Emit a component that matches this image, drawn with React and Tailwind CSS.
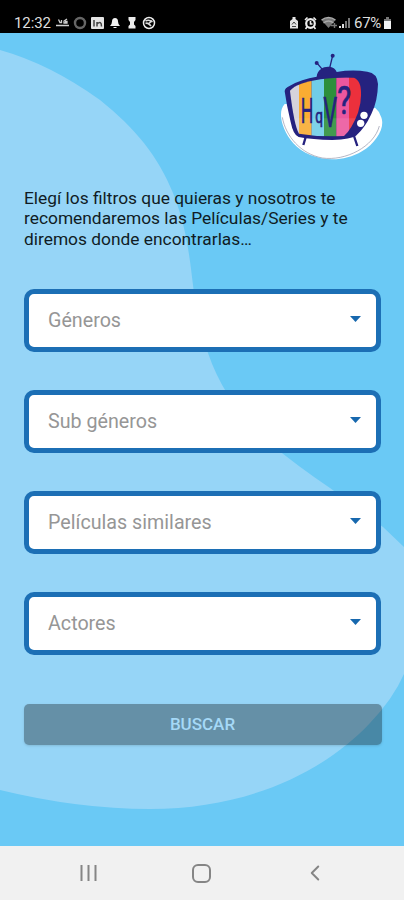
import { LuChevronLeft } from 'react-icons/lu';

const filters = ['Géneros', 'Sub géneros', 'Películas similares', 'Actores'];

function StatusBar() {
  return (
    <header className="flex h-[33px] items-end justify-between bg-black pr-3 pl-[14px] text-[#dedede]">
      <div className="flex h-5 items-center">
        <span className="w-[38px] text-[15px] leading-5 tracking-[-0.1px]">12:32</span>
        <svg className="ml-1" width="102" height="16" viewBox="0 0 102 16" fill="none">
          <path d="M0 10.500H13M2.500 4.500L4 7.500H5.500V5M11 4L8 6V8H11V6.500H9" stroke="#d0d0d0" strokeWidth="1.300" />
          <circle cx="24" cy="8" r="5" stroke="#666" strokeWidth="2.400" />
          <rect x="35" y="2" width="13" height="12" rx="1" fill="#e4e4e4" />
          <path d="M38 5V11.500M41 11.500V7M41 9Q45.500 5 45.500 11.500" stroke="#444" strokeWidth="1.500" />
          <path d="M54 11Q56 9 56 6.500Q56 3 59 3Q62 3 62 6.500Q62 9 64 11ZM57.500 12H60.500V13H57.500Z" fill="#f2f2f2" />
          <path d="M72.500 13.500V11L74 9.500V7L72.500 5V2H79.500V5L78 7V9.500L79.500 11V13.500Z" fill="#ececec" />
          <circle cx="93" cy="8" r="5.500" stroke="#eee" strokeWidth="1.500" />
          <path d="M89.500 6Q93 4 96.500 7M89.500 8.500Q92 7 95 11M92 9.500L96 5.500" stroke="#ddd" strokeWidth="1.600" />
        </svg>
      </div>
      <div className="flex h-5 items-center">
        <svg width="64" height="16" viewBox="0 0 64 16" fill="none">
          <path d="M0 13.500V6L2.500 4V2H5.500V4L8 6V13.500Z" fill="#e4e4e4" />
          <path d="M2 9.500L4 7L6 9.500M2 11.500H6" stroke="#444" />
          <circle cx="20.500" cy="8.500" r="4.300" stroke="#eee" strokeWidth="2.200" />
          <path d="M15 5L17.500 2.500M26 5L23.500 2.500M20.500 6V9H22.500M17 12L15.500 14M24 12L25.500 14" stroke="#eee" strokeWidth="1.600" />
          <path d="M31.500 5Q38.500 0 45.500 5L38.500 13Z" fill="#777" />
          <path d="M31.500 5Q38.500 0 45.500 5M33.500 8Q38.500 4 43.500 8" stroke="#aaa" strokeWidth="1.400" />
          <path d="M40.500 10.500H47M44.500 8V13" stroke="#777" strokeWidth="1.400" />
          <path d="M49 13V11H51V13ZM52 13V9H54V13Z" fill="#ddd" />
          <path d="M55 13V6H57V13ZM58 13V3H60V13Z" fill="#777" />
        </svg>
        <span className="w-[29px] text-[15px] leading-5 tracking-[-0.3px]">67%</span>
        <svg width="9" height="14" viewBox="0 0 9 14">
          <path d="M1 3H3V1H6V3H8V5H1Z" fill="#777" />
          <path d="M1 5H8V13H1Z" fill="#f2f2f2" />
        </svg>
      </div>
    </header>
  );
}

function TvLogo() {
  return (
    <svg className="block" width="104" height="112" viewBox="48 30 312 336" fill="none">
      <defs>
        <clipPath id="tv-screen">
          <path d="M78 152Q100 128 170 118Q230 110 270 113Q284 118 289 138Q296 175 282 218Q264 266 240 288Q170 292 105 281Q90 255 78 152Z" />
        </clipPath>
      </defs>
      <path d="M62 192C40 215 52 268 88 310C132 360 225 376 294 334C340 306 366 258 350 228Q345 213 334 204Z" fill="#fff" />
      <path d="M55 232C65 288 110 342 175 354C245 364 330 320 346 258" stroke="#8f93a8" strokeWidth="2" />

      {/* Case, legs and antennas */}
      <path d="M158 110C162 75 210 72 218 96Q265 88 310 95Q340 99 342 132Q341 185 322 222Q303 264 276 287Q262 297 205 300Q145 299 104 291Q88 286 80 246Q68 197 62 154Q62 144 78 137Q112 117 158 110Z" fill="#25227f" />
      <path d="M158 68L178 92M206 47L196 88" stroke="#25227f" strokeWidth="4" />
      <path d="M126 288L118 315M270 288L280 318" stroke="#25227f" strokeWidth="7" />
      <circle cx="158" cy="69" r="6" fill="#25227f" />
      <circle cx="206" cy="47" r="6" fill="#25227f" />

      <g clipPath="url(#tv-screen)">
        <path d="M60 100H105V300H60Z" fill="#d6d3dc" />
        <path d="M105 100H143V300H105Z" fill="#f9ac32" />
        <path d="M143 100H180V300H143Z" fill="#70cde8" />
        <path d="M180 100H217V300H180Z" fill="#2d8f3c" />
        <path d="M217 100H255V300H217Z" fill="#eb579e" />
        <path d="M255 100H300V300H255Z" fill="#ec303c" />
        <path d="M60 235H300V300H60Z" fill="#fff" opacity=".1" />
      </g>
      <g fill="#25227f" stroke="#25227f" strokeWidth="2" fontFamily="Roboto, sans-serif">
        <text transform="translate(110 248) scale(.5 1)" fontSize="106">H</text>
        <text transform="translate(154 249) scale(.66 1)" fontSize="62">q</text>
        <text transform="translate(178 262) scale(.5 1)" fontSize="130">V</text>
        <text transform="translate(220 221) scale(.74 1)" fontSize="119">?</text>
      </g>
      <circle cx="300" cy="226" r="11" fill="#fff" />
      <circle cx="290" cy="250" r="11" fill="#fff" />
    </svg>
  );
}

function FilterSelect({ label }) {
  return (
    <button className="flex h-[63px] w-full items-center justify-between rounded-[10px] border-[5px] border-[#1c6fb5] bg-white pr-[15px] pl-[19px] text-left">
      <span className="pt-0.5 text-[19.700px] leading-6 text-[#969696]">{label}</span>
      <svg className="mb-[3px]" width="11" height="6" viewBox="0 0 11 6">
        <path d="M0 0H11L5.500 6Z" fill="#1768ae" />
      </svg>
    </button>
  );
}

export default function App() {
  return (
    <div className="flex h-[900px] w-[404px] flex-col overflow-hidden font-['Roboto',sans-serif]">
      <StatusBar />
      <main className="relative isolate flex h-[813px] flex-col bg-[#6ac9f5] px-6 pt-[17px]">
        <svg className="absolute inset-0 -z-10" width="404" height="813" viewBox="0 33 404 813">
          <path
            d="M0 50Q50 64 100 100C136 129 158 156 173 193C186 226 189 252 193 285Q196 320 208 353Q224 400 263 438Q300 468 330 488L383 527L404 547V674Q393 699 370 723C322 774 245 809 150 809Q78 809 0 790Z"
            fill="#96d5f7"
          />
        </svg>
        <div className="-mr-1 flex h-[112px] justify-end">
          <TvLogo />
        </div>
        <p className="mt-[26px] text-[17.350px] leading-[20.300px] text-[#101c24]">
          Elegí los filtros que quieras y nosotros te
          <br />
          recomendaremos las Películas/Series y te
          <br />
          diremos donde encontrarlas…
        </p>
        <div className="mt-10 -mr-px flex flex-col gap-[38px]">
          {filters.map((label) => (
            <FilterSelect key={label} label={label} />
          ))}
        </div>
        <button className="mt-[49px] -mr-0.5 h-[41px] rounded-[5px] bg-black/32 pr-px text-[17px] font-medium text-[#a5d9f7] shadow-sm">
          BUSCAR
        </button>
      </main>
      <nav className="flex h-[54px] items-center bg-[#f1f1f1] pl-[79px] text-[#858585]">
        <svg width="19" height="18" viewBox="0 0 19 18">
          <path d="M2.500 1V17M9.500 1V17M16.500 1V17" stroke="currentColor" strokeWidth="2" />
        </svg>
        <div className="ml-[94px] h-[19px] w-[19px] rounded-[6px] border-2 border-[#858585]" />
        <LuChevronLeft className="ml-[91px]" size={26} strokeWidth={1.8} />
      </nav>
    </div>
  );
}
